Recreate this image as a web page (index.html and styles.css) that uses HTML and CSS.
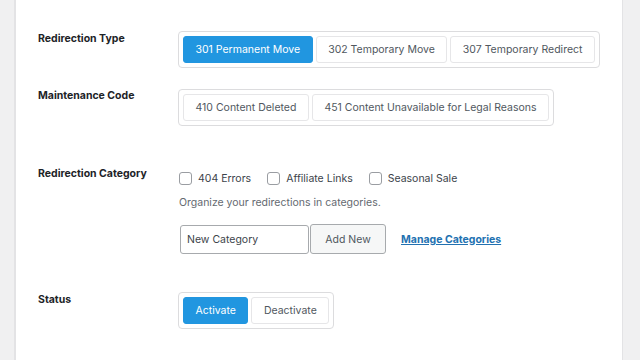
FILE: index.html
```html
<!DOCTYPE html>
<html lang="en">
<head>
    <meta charset="UTF-8">
    <meta name="viewport" content="width=device-width, initial-scale=1.0">
    <title>Redirection Settings</title>
    <link rel="stylesheet" href="styles.css">
</head>
<body>
    <div class="side side-left"></div>

    <main class="panel">
        <!-- Redirection type -->
        <div class="row row-type">
            <div class="row-label">Redirection Type</div>
            <div class="row-field">
                <div class="btn-group">
                    <button class="btn active">301 Permanent Move</button>
                    <button class="btn">302 Temporary Move</button>
                    <button class="btn">307 Temporary Redirect</button>
                </div>
            </div>
        </div>

        <!-- Maintenance -->
        <div class="row row-code">
            <div class="row-label">Maintenance Code</div>
            <div class="row-field">
                <div class="btn-group">
                    <button class="btn">410 Content Deleted</button>
                    <button class="btn">451 Content Unavailable for Legal Reasons</button>
                </div>
            </div>
        </div>

        <!-- Category -->
        <div class="row row-category">
            <div class="row-label">Redirection Category</div>
            <div class="row-field">
                <div class="checks">
                    <label class="check"><span class="box"></span>404 Errors</label>
                    <label class="check"><span class="box"></span>Affiliate Links</label>
                    <label class="check"><span class="box"></span>Seasonal Sale</label>
                </div>
                <p class="description">Organize your redirections in categories.</p>
                <div class="add-category">
                    <input type="text" class="text-input" value="New Category">
                    <button class="btn-add">Add New</button>
                    <a href="#" class="manage-link">Manage Categories</a>
                </div>
            </div>
        </div>

        <!-- Status -->
        <div class="row row-status">
            <div class="row-label">Status</div>
            <div class="row-field">
                <div class="btn-group">
                    <button class="btn active">Activate</button>
                    <button class="btn">Deactivate</button>
                </div>
            </div>
        </div>
    </main>

    <div class="side side-right"></div>
</body>
</html>
```

FILE: styles.css
```css
/* Base */
body {
    margin: 0;
    height: 360px;
    overflow: hidden;
    display: flex;
    font-family: Inter, "Noto Sans", sans-serif;
    font-size: 10.5px;
    color: #1d2327;
    background: #f0f0f1;
}

.side {
    background: #f0f0f1;
}

.side-left {
    width: 14px;
    border-right: 2px solid #e3e3e5;
}

.side-right {
    width: 17px;
    border-left: 1px solid #e3e3e5;
}

.panel {
    flex: 1;
    background: #fff;
    padding: 31px 0 0 22px;
}

/* rows */
.row {
    display: grid;
    grid-template-columns: 140px 1fr;
}

.row-code { margin-top: 21px; }
.row-category { margin-top: 41px; }
.row-status { margin-top: 38px; }

.row-label {
    font-weight: 700;
    color: #1d2327;
    padding-top: 1px;
}

.row-code .row-label { padding-top: 0; }
.row-category .row-label { padding-top: 0; }

/* button groups */
.btn-group {
    display: inline-flex;
    gap: 3px;
    padding: 4px;
    border: 1px solid #dcdcde;
    border-radius: 4px;
}

.btn {
    height: 27px;
    padding: 0 11.5px;
    font-family: inherit;
    font-size: 10.5px;
    color: #50575e;
    background: #fff;
    border: 1px solid #e6e6e8;
    border-radius: 3px;
}

.btn.active {
    background: #2196e0;
    border-color: #2196e0;
    color: #fff;
}

/* checkboxes */
.row-category .row-field {
    padding-top: 5px;
}

.checks {
    display: flex;
    gap: 16px;
    padding-left: 1px;
    color: #3c434a;
}

.check {
    display: flex;
    align-items: center;
    gap: 6px;
}

.box {
    width: 11px;
    height: 11px;
    border: 1px solid #9a9da2;
    border-radius: 3px;
    background: #fff;
}

.description {
    margin: 11px 0 0 1px;
    color: #646970;
}

/* new category */
.add-category {
    display: flex;
    align-items: center;
    margin-top: 15px;
    padding-left: 2px;
}

.text-input {
    width: 129px;
    height: 29px;
    box-sizing: border-box;
    padding: 0 6px;
    font-family: inherit;
    font-size: 10.5px;
    color: #3c434a;
    border: 1px solid #a7aaad;
    border-radius: 3px;
}

.btn-add {
    width: 76px;
    height: 30px;
    margin-left: 1px;
    font-family: inherit;
    font-size: 10.5px;
    color: #50575e;
    background: #f6f7f7;
    border: 1px solid #a7aaad;
    border-radius: 3px;
}

.manage-link {
    margin-left: 15px;
    color: #2271b1;
    font-weight: 700;
}
```
